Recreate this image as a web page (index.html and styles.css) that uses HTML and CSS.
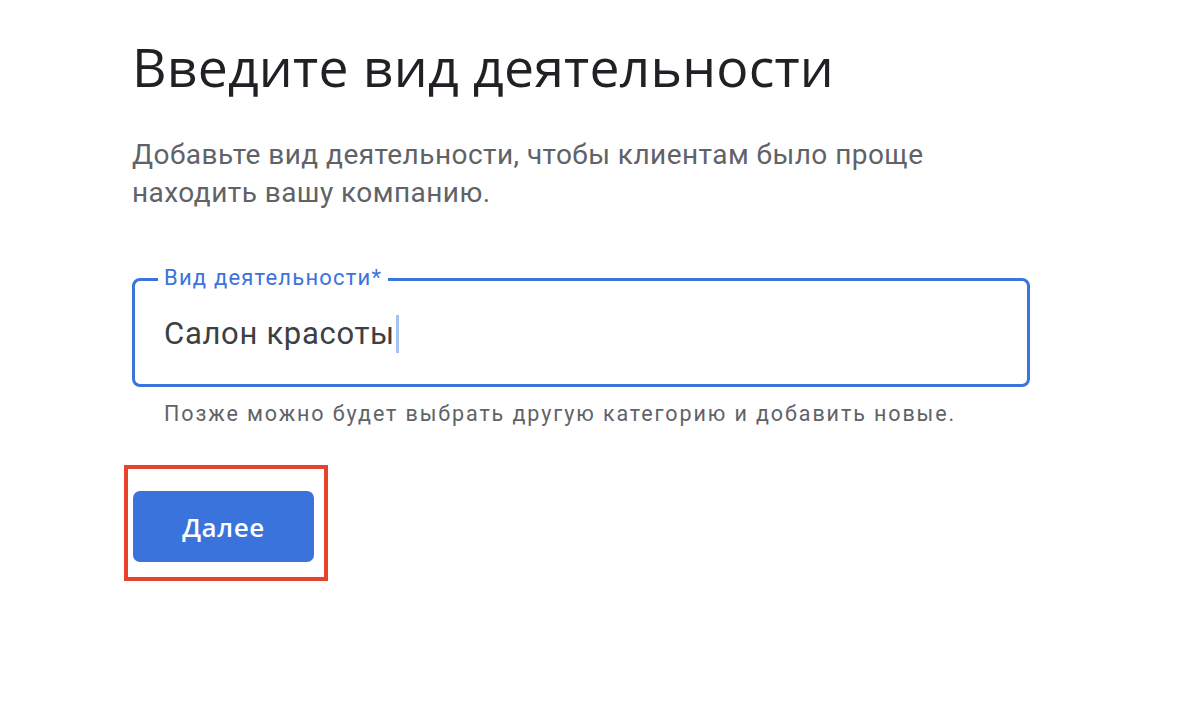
FILE: index.html
```html
<!DOCTYPE html>
<html lang="ru">
<head>
<meta charset="utf-8">
<link rel="stylesheet" href="styles.css">
</head>
<body>
<main class="page">
  <h1 class="title">Введите вид деятельности</h1>
  <p class="lead">Добавьте вид деятельности, чтобы клиентам было проще находить вашу компанию.</p>
  <div class="field">
    <span class="field-label">Вид деятельности*</span>
    <div class="field-value">Салон красоты<span class="caret"></span></div>
  </div>
  <p class="hint">Позже можно будет выбрать другую категорию и добавить новые.</p>
  <div class="highlight">
    <button class="btn">Далее</button>
  </div>
</main>
</body>
</html>
```

FILE: styles.css
```css
html, body {
  margin: 0;
  padding: 0;
  background: #ffffff;
}
body {
  font-family: Roboto, "Noto Sans", Arial, sans-serif;
}
.page {
  padding: 33px 0 0 132px;
  width: 898px;
}
.title {
  margin: 0;
  font-family: "Open Sans", Roboto, sans-serif;
  font-weight: 400;
  font-size: 53.5px;
  line-height: 68px;
  color: #202124;
  letter-spacing: 0.2px;
}
.lead {
  margin: 35px 0 0 0;
  font-size: 28px;
  line-height: 38px;
  color: #5f6368;
  width: 830px;
  letter-spacing: 0.45px;
}
.field {
  position: relative;
  margin-top: 66px;
  height: 103px;
  border: 3px solid #3b74db;
  border-radius: 8px;
  box-sizing: content-box;
  display: flex;
  align-items: center;
  padding-left: 29px;
}
.field-label {
  position: absolute;
  top: -17px;
  left: 23px;
  padding: 0 6px;
  background: #fff;
  color: #3b74db;
  font-size: 22px;
  line-height: 28px;
  letter-spacing: 1.2px;
}
.field-value {
  font-size: 31px;
  color: #3c4043;
  display: flex;
  align-items: center;
  letter-spacing: 0.7px;
  margin-top: 2px;
}
.caret {
  display: inline-block;
  width: 3px;
  height: 38px;
  background: #a8c2f0;
  margin-left: 1px;
}
.hint {
  margin: 14px 0 0 32px;
  font-size: 21.5px;
  line-height: 26px;
  color: #5f6368;
  letter-spacing: 1.9px;
}
.highlight {
  margin: 38px 0 0 -8px;
  width: 196px;
  height: 108px;
  border: 4px solid #e5432b;
  box-sizing: content-box;
  padding: 0;
}
.btn {
  display: block;
  width: 181px;
  height: 71px;
  border: none;
  border-radius: 7px;
  background: #3b73dc;
  color: #ffffff;
  font-family: "Open Sans", Roboto, sans-serif;
  font-size: 26px;
  font-weight: 600;
  letter-spacing: 0.6px;
  margin: 22px 0 0 5px;
  padding: 0;
}
```
